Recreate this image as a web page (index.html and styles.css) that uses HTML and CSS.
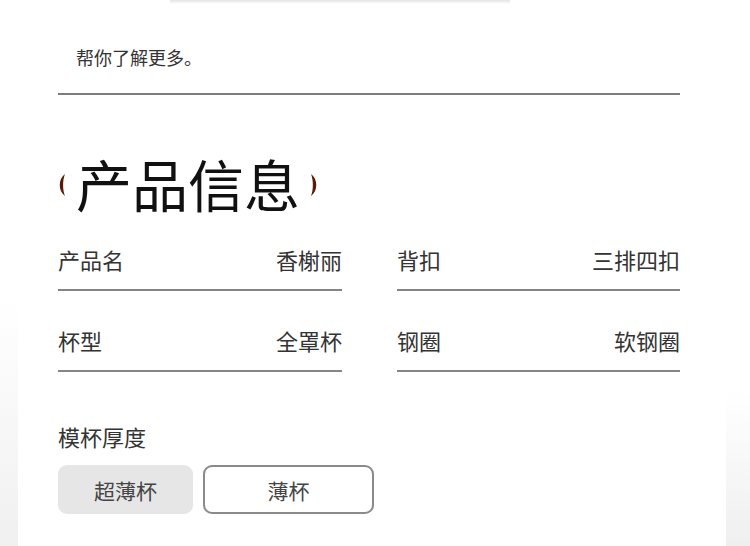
FILE: index.html
```html
<!DOCTYPE html>
<html lang="zh-CN">
<head>
<meta charset="utf-8">
<title>产品信息</title>
<link rel="stylesheet" href="styles.css">
</head>
<body>
<div class="wrap">
  <p class="intro">帮你了解更多。</p>
  <div class="rule"></div>

  <h1 class="title">
    <svg class="paren" viewBox="0 0 9 24" width="9" height="24" aria-hidden="true"><path d="M7 1 C0 6 0 18 7 23 C4.5 17 4.5 7 7 1 Z" fill="#5b1a08"/></svg>
    <span>产品信息</span>
    <svg class="paren" viewBox="0 0 9 24" width="9" height="24" aria-hidden="true"><path d="M2 1 C9 6 9 18 2 23 C4.5 17 4.5 7 2 1 Z" fill="#5b1a08"/></svg>
  </h1>

  <div class="specs">
    <div class="spec"><span>产品名</span><span>香榭丽</span></div>
    <div class="spec"><span>背扣</span><span>三排四扣</span></div>
    <div class="spec"><span>杯型</span><span>全罩杯</span></div>
    <div class="spec"><span>钢圈</span><span>软钢圈</span></div>
  </div>

  <div class="option-label">模杯厚度</div>
  <div class="options">
    <button class="opt opt-active">超薄杯</button>
    <button class="opt opt-outline">薄杯</button>
  </div>
</div>
</body>
</html>
```
FILE: styles.css
```css
html, body {
  margin: 0;
  padding: 0;
}
body {
  width: 750px;
  height: 546px;
  overflow: hidden;
  font-family: "Noto Sans CJK SC", "Noto Sans", sans-serif;
  color: #333;
  background:
    linear-gradient(to bottom, #e4e4e4, #ffffff) 170px 0 / 340px 4px no-repeat,
    linear-gradient(to bottom, #ffffff, #efefef) 726px 390px / 24px 156px no-repeat,
    linear-gradient(to bottom, #ffffff, #f0f0f0) 0 300px / 18px 246px no-repeat,
    #ffffff;
}
.wrap {
  width: 622px;
  padding-left: 58px;
}
.intro {
  margin: 0;
  padding: 44px 0 0 18px;
  font-size: 18px;
  line-height: 26px;
  color: #333;
}
.rule {
  margin-top: 23px;
  height: 2px;
  background: #7c7c7c;
}
.title {
  margin: 60px 0 0 0;
  display: flex;
  align-items: center;
  gap: 9px;
  font-size: 56px;
  line-height: 56px;
  font-weight: 400;
  color: #111;
}
.paren {
  display: block;
  margin-top: 4px;
}
.specs {
  margin-top: 33px;
  display: grid;
  grid-template-columns: 284px 283px;
  column-gap: 55px;
  row-gap: 34px;
}
.spec {
  display: flex;
  justify-content: space-between;
  font-size: 22px;
  line-height: 30px;
  padding-bottom: 15px;
  border-bottom: 2px solid #858585;
  color: #333;
}
.option-label {
  margin-top: 49px;
  font-size: 22px;
  line-height: 30px;
  color: #333;
}
.options {
  margin-top: 14px;
  display: flex;
  gap: 10px;
}
.opt {
  font-family: inherit;
  font-size: 21px;
  color: #444;
  height: 49px;
  border-radius: 9px;
  padding: 0;
}
.opt-active {
  width: 135px;
  background: #e6e6e6;
  border: none;
}
.opt-outline {
  width: 171px;
  background: #fff;
  border: 2px solid #8a8a8a;
}
```
